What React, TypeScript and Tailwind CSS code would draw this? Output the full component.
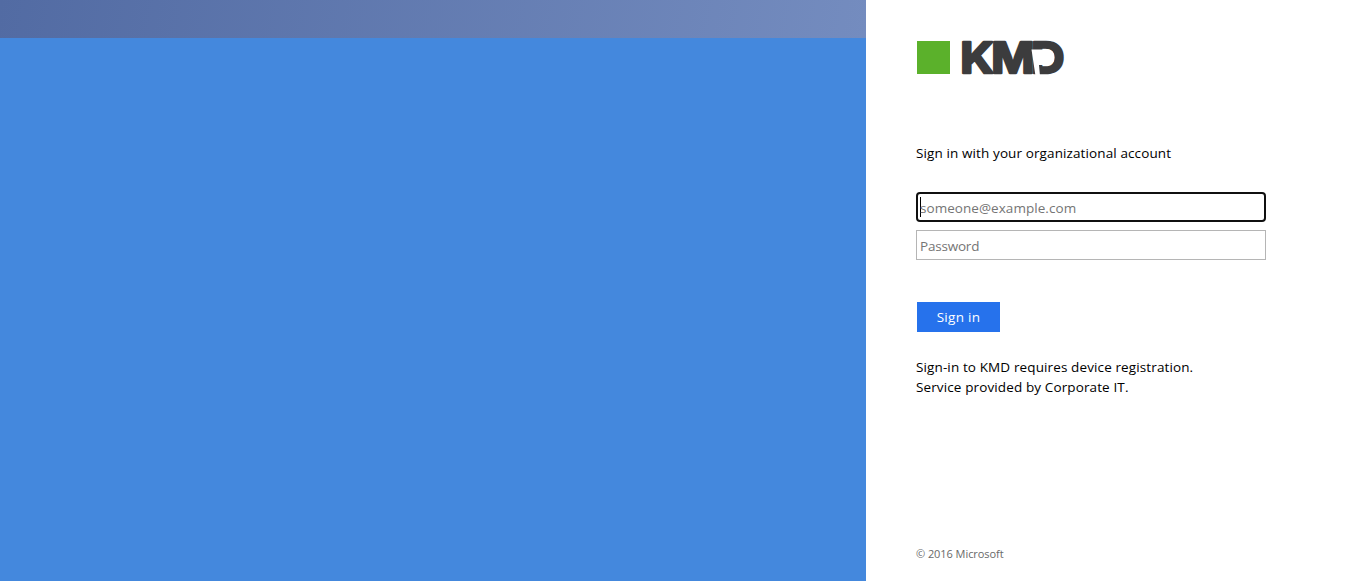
function Logo() {
  return (
    <svg
      className="block h-[36px] w-[150px] overflow-visible"
      viewBox="0 0 150 36"
      role="img"
      aria-label="KMD"
    >
      <rect x="1" y="2" width="33" height="33" fill="#5bb12b" />
      <text
        transform="translate(-2.8 0) scale(1.092 1)"
        x="43 71.5 108"
        y="34"
        fill="#3c3c3d"
        stroke="#3c3c3d"
        strokeWidth="2.4"
        strokeLinejoin="round"
        fontFamily="Inter, sans-serif"
        fontWeight="700"
        fontSize="42.5"
      >
        KMD
      </text>
      <path d="M115.5 10.5H131Q138.5 10.5 138.5 18.5Q138.5 26 131 26H123L124 37H119.5Z" fill="#fff" />
    </svg>
  );
}

export default function App() {
  return (
    <div className="flex h-[581px] w-full overflow-hidden bg-white font-['Open_Sans','Noto_Sans',sans-serif] text-[13.5px] leading-5 tracking-[0.11px] text-black">
      <div className="flex min-w-0 flex-1 flex-col bg-[#4488dd]">
        <div className="h-[38px] bg-[linear-gradient(100deg,#526ba3,#748cbf)]" />
      </div>
      <main className="flex w-[500px] shrink-0 flex-col px-[50px] pt-[39px]">
        <Logo />
        <p className="mt-[68px] whitespace-nowrap">Sign in with your organizational account</p>
        <form className="mt-[29px] flex flex-col items-start" onSubmit={(e) => e.preventDefault()}>
          <div className="flex h-[30px] w-[350px] items-center rounded-[4px] border-2 border-[#101010] bg-white pl-[2px]">
            <span className="-mr-px h-[20px] w-px bg-black" />
            <input
              aria-label="User account"
              placeholder="someone@example.com"
              className="w-full pt-[2px] tracking-[0.05px] outline-none placeholder:text-[#757575]"
            />
          </div>
          <input
            type="password"
            aria-label="Password"
            placeholder="Password"
            className="mt-2 h-[30px] w-[350px] border border-[#b5b5b5] px-[3px] pt-[2px] tracking-[-0.2px] outline-none placeholder:text-[#757575]"
          />
          <button className="mt-[42px] ml-px h-[30px] w-[83px] bg-[#2672ec] tracking-[0.3px] text-white">Sign in</button>
        </form>
        <p className="mt-[25px] whitespace-nowrap tracking-[0.12px]">
          Sign-in to KMD requires device registration.
          <br />
          Service provided by Corporate IT.
        </p>
        <footer className="mt-auto mb-[17px] text-[11px] tracking-[-0.06px] text-[#696969]">© 2016 Microsoft</footer>
      </main>
    </div>
  );
}
